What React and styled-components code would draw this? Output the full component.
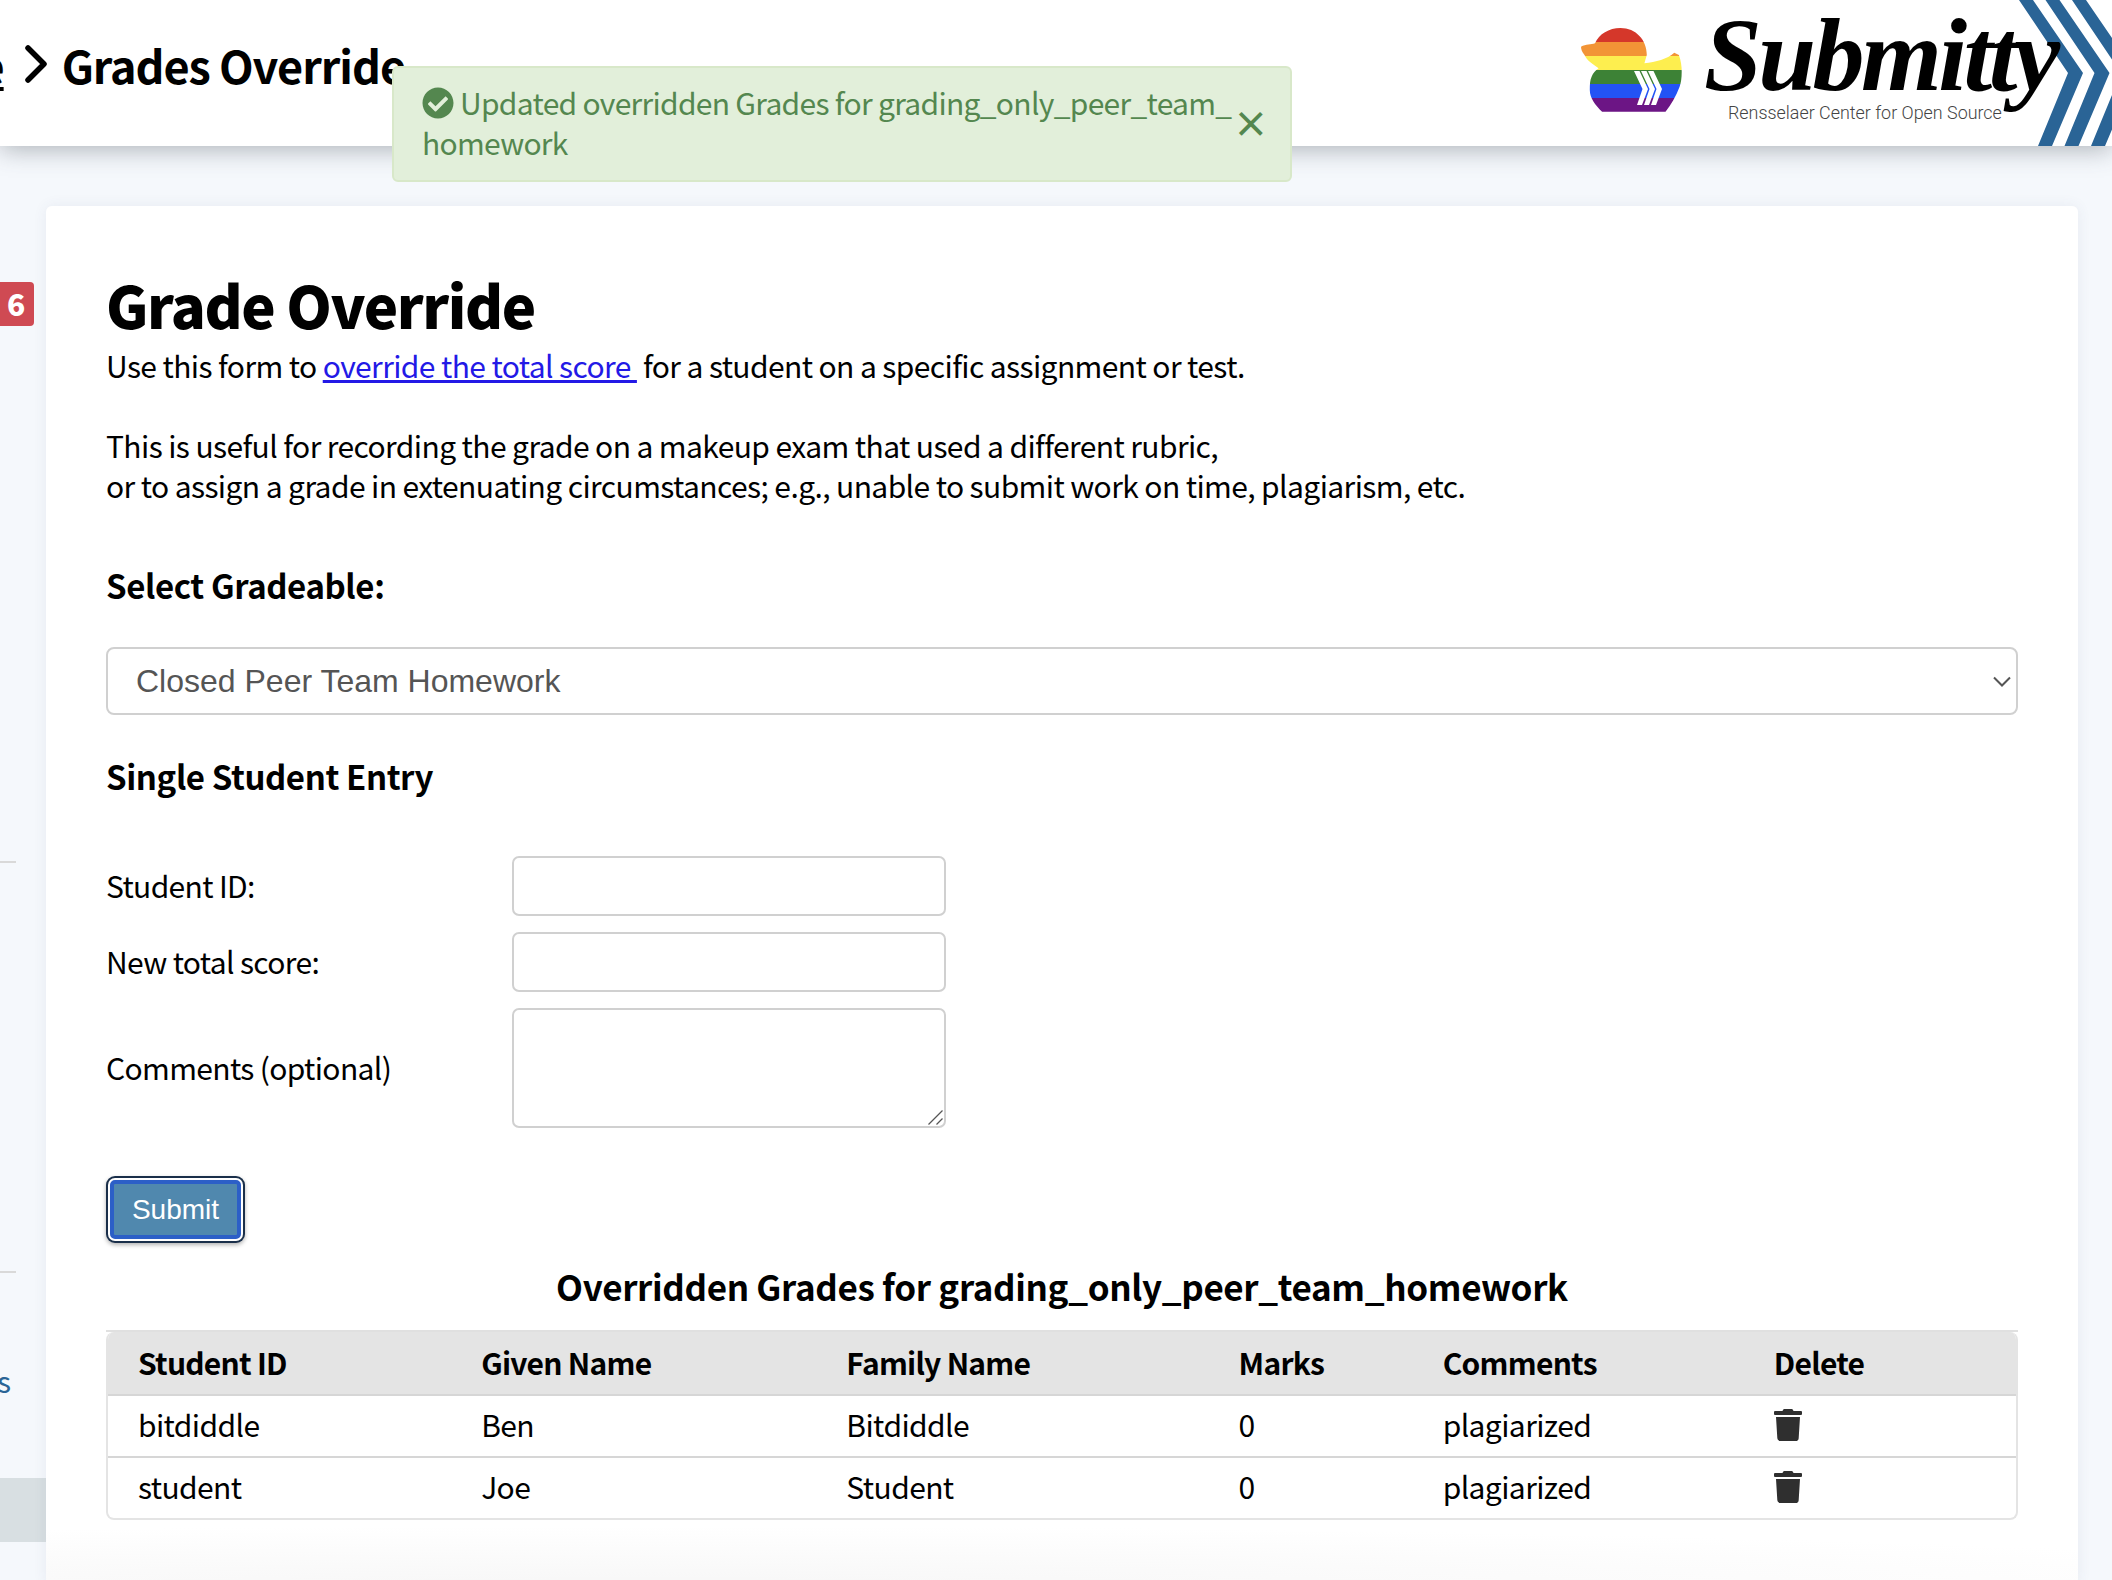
import React from 'react';
import styled, { createGlobalStyle } from 'styled-components';
import { FaTrash, FaCheckCircle } from 'react-icons/fa';

const SANS = '"Noto Sans CJK SC", "Noto Sans", sans-serif';
const ARIAL = '"Liberation Sans", Arial, sans-serif';

const GlobalStyle = createGlobalStyle`
  html, body {
    margin: 0;
    height: 1580px;
    overflow: hidden;
    background: #f5f8fc;
    font-family: ${SANS};
    color: #000;
  }
  * { box-sizing: border-box; }
`;

const Page = styled.div`
  display: flex;
  flex-direction: column;
  height: 1580px;
  overflow: hidden;
`;

const Header = styled.header`
  display: flex;
  justify-content: space-between;
  height: 146px;
  background: #fff;
  box-shadow: 0 3px 24px rgba(60, 70, 80, 0.4);
  position: relative;
`;

const Breadcrumbs = styled.nav`
  display: flex;
  justify-content: flex-end;
  align-items: center;
  width: 405px;
  height: 128px;
  overflow: hidden;
  white-space: nowrap;
  font-size: 45px;
  font-weight: 700;
  letter-spacing: -1.05px;
  flex-shrink: 0;
`;

const CrumbLink = styled.a`
  color: #000;
  text-decoration: underline;
`;

const CrumbArrow = styled.svg`
  width: 24px;
  height: 38px;
  margin: 0 14px 0 20px;
  flex-shrink: 0;
`;

const Logo = styled.div`
  display: flex;
  height: 146px;
  overflow: hidden;
  flex-shrink: 0;
`;

const Duck = styled.svg`
  width: 101px;
  height: 84px;
  margin-top: 28px;
  margin-right: 22px;
`;

const Wordmark = styled.div`
  position: relative;
  z-index: 1;
  width: 315px;
  height: 146px;
`;

const WordmarkName = styled.span`
  display: block;
  font-family: "Liberation Serif", serif;
  font-style: italic;
  font-weight: 700;
  font-size: 104px;
  line-height: 110px;
  letter-spacing: -3.6px;
  white-space: nowrap;
`;

const Tagline = styled.span`
  position: absolute;
  left: 24px;
  top: 101px;
  font-family: Roboto, sans-serif;
  font-weight: 300;
  font-size: 17.9px;
  line-height: 24px;
  color: #444;
  white-space: nowrap;
`;

const Chevrons = styled.svg`
  width: 93px;
  height: 146px;
`;

const Alert = styled.div`
  position: fixed;
  top: 66px;
  left: 392px;
  width: 900px;
  height: 116px;
  padding: 14px 50px 0 28px;
  background: #e2efda;
  border: 2px solid #d8e8c9;
  border-radius: 6px;
  color: #54874f;
  font-size: 30px;
  letter-spacing: -0.7px;
  line-height: 40px;
  z-index: 5;
`;

const AlertIcon = styled(FaCheckCircle)`
  width: 32px;
  height: 32px;
  margin-right: 6px;
  vertical-align: -4px;
`;

const AlertClose = styled.span`
  position: absolute;
  right: 22px;
  top: 34px;
  font-size: 36px;
  line-height: 40px;
  font-weight: 700;
`;

const Main = styled.div`
  display: flex;
  flex: 1;
  padding-top: 60px;
  min-height: 0;
`;

const Sidebar = styled.aside`
  display: flex;
  flex-direction: column;
  width: 46px;
  flex-shrink: 0;
`;

const Badge = styled.span`
  align-self: flex-start;
  width: 34px;
  height: 44px;
  margin-top: 76px;
  padding-left: 7px;
  background: #cf4a53;
  border-radius: 0 4px 4px 0;
  color: #fff;
  font-size: 30px;
  font-weight: 900;
  line-height: 42px;
`;

const SideRule = styled.hr`
  width: 16px;
  height: 2px;
  margin: ${(p) => p.$top}px 0 0;
  border: 0;
  background: #d9d9d9;
`;

const SideLabel = styled.span`
  margin-top: 87px;
  color: #2a6496;
  font-size: 30px;
  line-height: 40px;
  height: 40px;
  overflow: hidden;
  display: flex;
  justify-content: flex-end;
  width: 11px;
`;

const SideActive = styled.div`
  height: 64px;
  margin-top: 78px;
  background: #d8dfe2;
`;

const Card = styled.main`
  width: 2032px;
  height: 1380px;
  padding: 64px 60px 0;
  background: radial-gradient(ellipse 1800px 60px at 30% 100%, #f7f7f7, #fff);
  border-radius: 6px;
  box-shadow: 0 0 14px rgba(60, 80, 110, 0.08);
`;

const Title = styled.h1`
  margin: 0;
  font-size: 58px;
  font-weight: 900;
  letter-spacing: -1.4px;
  line-height: 68px;
`;

const Text = styled.p`
  margin: ${(p) => p.$top}px 0 0;
  font-size: 30px;
  letter-spacing: -0.6px;
  line-height: 40px;
`;

const TextLink = styled.a`
  color: #2319e6;
  text-decoration: underline;
  margin-right: 6px;
`;

const SectionTitle = styled.h2`
  margin: ${(p) => p.$top}px 0 0;
  font-size: 33px;
  font-weight: 700;
  letter-spacing: -0.4px;
  line-height: 40px;
`;

const SelectWrap = styled.div`
  position: relative;
  margin-top: 42px;
`;

const GradeableSelect = styled.select`
  display: block;
  width: 100%;
  height: 68px;
  padding: 0 0 0 28px;
  appearance: none;
  background: #fff;
  border: 2px solid #d0d0d0;
  border-radius: 8px;
  color: #555;
  font-family: ${ARIAL};
  font-size: 32px;
`;

const SelectArrow = styled.svg`
  position: absolute;
  right: 7px;
  top: 29px;
  width: 18px;
  height: 11px;
`;

const EntryForm = styled.form`
  display: grid;
  grid-template-columns: 406px 434px;
  row-gap: 16px;
  align-items: center;
  margin-top: 60px;
`;

const FieldLabel = styled.label`
  padding-bottom: 2px;
  font-size: 30px;
  letter-spacing: -0.65px;
  line-height: 40px;
`;

const TextField = styled.input`
  display: block;
  width: 100%;
  height: 60px;
  background: #fff;
  border: 2px solid #d0d0d0;
  border-radius: 7px;
`;

const CommentsWrap = styled.div`
  position: relative;
  height: 120px;
`;

const CommentsField = styled.textarea`
  display: block;
  width: 100%;
  height: 100%;
  resize: none;
  background: #fff;
  border: 2px solid #d0d0d0;
  border-radius: 7px;
`;

const ResizeGrip = styled.svg`
  position: absolute;
  right: 3px;
  bottom: 3px;
  width: 15px;
  height: 15px;
`;

const SubmitButton = styled.button`
  display: block;
  width: 131px;
  height: 59px;
  margin: 52px 0 0 4px;
  padding: 0;
  background: #5088ae;
  border: 4px solid #2c5fc7;
  border-radius: 5px;
  box-shadow: 0 0 0 2px #fff, 0 0 0 4px #1a2f4a, 0 2px 4px 4px rgba(0, 0, 0, 0.3);
  color: #fff;
  font-family: ${ARIAL};
  font-size: 28px;
`;

const TableTitle = styled.h2`
  margin: 27px 0 0;
  font-size: 35px;
  font-weight: 700;
  letter-spacing: -0.35px;
  line-height: 40px;
  text-align: center;
`;

const TableRule = styled.div`
  height: 2px;
  margin-top: 24px;
  background: #e0e0e0;
`;

const TableFrame = styled.div`
  border: solid #e4e4e4;
  border-width: 0 2px 2px;
  border-radius: 8px;
  overflow: hidden;
`;

const GradesTable = styled.table`
  width: 100%;
  table-layout: fixed;
  border-collapse: separate;
  border-spacing: 0;
  font-size: 30px;
  letter-spacing: -0.6px;
`;

const HeadCell = styled.th`
  height: 64px;
  padding: 0 0 3px 30px;
  background: #e4e4e4;
  border-bottom: 2px solid #d6d6d6;
  font-weight: 700;
  letter-spacing: -0.75px;
  text-align: left;
`;

const Cell = styled.td`
  height: ${(p) => (p.$last ? 60 : 62)}px;
  padding: 0 0 4px 30px;
  border-bottom: ${(p) => (p.$last ? 0 : '2px solid #d6d6d6')};
`;

const TrashIcon = styled(FaTrash)`
  display: block;
  width: 28px;
  height: 32px;
  margin-top: 2px;
  color: #2f2f2f;
`;

const grades = [
  { id: 'bitdiddle', given: 'Ben', family: 'Bitdiddle', marks: 0, comment: 'plagiarized' },
  { id: 'student', given: 'Joe', family: 'Student', marks: 0, comment: 'plagiarized' },
];

const columns = [343, 365, 392, 204, 331, 272];

// white stripes of the chevron inside the duck
const duckStripes = [0, 7, 14];

const App = () => (
  <Page>
    <GlobalStyle />
    <Header>
      <Breadcrumbs>
        <CrumbLink>Home</CrumbLink>
        <CrumbArrow viewBox="0 0 24 38">
          <path d="M4 3 L20 19 L4 35" fill="none" stroke="#000" strokeWidth="5.5" strokeLinecap="round" strokeLinejoin="round" />
        </CrumbArrow>
        <span>Grades Override</span>
      </Breadcrumbs>
      <Logo>
        <Duck viewBox="0 0 101 84">
          <defs>
            <clipPath id="duck-shape">
              <path d="M39.4 0C55 0 65.8 12 65.8 27L63.4 35.3C75 34 86 31 93.3 24.7L97.9 27C100 33 100.7 38 100.7 43.7C100.7 50 100 55 98.6 58.7C95 68 90 77 84.5 83.7L21.1 83.7C14 77 8.8 70 8.8 62C8.8 56 9 52 10.6 48.7C12 45 15 42 17.6 40.3C12 36 6 33 3.5 27C1 24 0 21 0 18.7C5 16 10 17 14 15.3C18 6 28 0 39.4 0Z" />
            </clipPath>
          </defs>
          <g clipPath="url(#duck-shape)">
            <rect y="0" width="101" height="14" fill="#d5372a" />
            <rect y="14" width="101" height="14" fill="#f29436" />
            <rect y="28" width="101" height="14" fill="#fdee4f" />
            <rect y="42" width="101" height="14" fill="#3d8236" />
            <rect y="56" width="101" height="14" fill="#2353f5" />
            <rect y="70" width="101" height="14" fill="#6c1585" />
          </g>
          {duckStripes.map((d) => (
            <path
              key={d}
              d={`M${53 + d} 43H${58.5 + d}L${67 + d} 61L${61 + d} 77H${56 + d}L${61.5 + d} 61Z`}
              fill="#fff"
            />
          ))}
        </Duck>
        <Wordmark>
          <WordmarkName>Submitty</WordmarkName>
          <Tagline>Rensselaer Center for Open Source</Tagline>
        </Wordmark>
        <Chevrons viewBox="0 0 93 146">
          <path d="M0 0H14L64 73L33 146H19L49 73Z" fill="#2a6496" />
          <path d="M26.5 0H40.5L90.5 73L59.5 146H45.5L75.5 73Z" fill="#2a6496" />
          <path d="M53 0H67L117 73L86 146H72L102 73Z" fill="#2a6496" />
        </Chevrons>
      </Logo>
    </Header>

    <Alert>
      <AlertIcon />
      Updated overridden Grades for grading_only_peer_team_
      <br />
      homework
      <AlertClose>×</AlertClose>
    </Alert>

    <Main>
      <Sidebar>
        <Badge>6</Badge>
        <SideRule $top={535} />
        <SideRule $top={408} />
        <SideLabel>s</SideLabel>
        <SideActive />
      </Sidebar>
      <Card>
        <Title>Grade Override</Title>
        <Text $top={7}>
          Use this form to <TextLink href="#">override the total score </TextLink> for a student on a specific assignment or test.
        </Text>
        <Text $top={40}>
          This is useful for recording the grade on a makeup exam that used a different rubric,
          <br />
          or to assign a grade in extenuating circumstances; e.g., unable to submit work on time, plagiarism, etc.
        </Text>
        <SectionTitle $top={60}>Select Gradeable:</SectionTitle>
        <SelectWrap>
          <GradeableSelect defaultValue="closed">
            <option value="closed">Closed Peer Team Homework</option>
          </GradeableSelect>
          <SelectArrow viewBox="0 0 18 11">
            <path d="M1 1.5 L9 9.5 L17 1.5" fill="none" stroke="#555" strokeWidth="2" />
          </SelectArrow>
        </SelectWrap>
        <SectionTitle $top={41}>Single Student Entry</SectionTitle>
        <EntryForm>
          <FieldLabel>Student ID:</FieldLabel>
          <TextField />
          <FieldLabel>New total score:</FieldLabel>
          <TextField />
          <FieldLabel>Comments (optional)</FieldLabel>
          <CommentsWrap>
            <CommentsField />
            <ResizeGrip viewBox="0 0 15 15">
              <path d="M0.5 14.5 L14.5 0.5 M8.5 14.5 L14.5 8.5" stroke="#555" strokeWidth="1.3" fill="none" />
            </ResizeGrip>
          </CommentsWrap>
        </EntryForm>
        <SubmitButton type="button">Submit</SubmitButton>
        <TableTitle>Overridden Grades for grading_only_peer_team_homework</TableTitle>
        <TableRule />
        <TableFrame>
          <GradesTable>
            <colgroup>
              {columns.map((w) => (
                <col key={w} width={w} />
              ))}
            </colgroup>
            <thead>
              <tr>
                <HeadCell>Student ID</HeadCell>
                <HeadCell>Given Name</HeadCell>
                <HeadCell>Family Name</HeadCell>
                <HeadCell>Marks</HeadCell>
                <HeadCell>Comments</HeadCell>
                <HeadCell>Delete</HeadCell>
              </tr>
            </thead>
            <tbody>
              {grades.map((g, i) => {
                const last = i === grades.length - 1;
                return (
                  <tr key={g.id}>
                    <Cell $last={last}>{g.id}</Cell>
                    <Cell $last={last}>{g.given}</Cell>
                    <Cell $last={last}>{g.family}</Cell>
                    <Cell $last={last}>{g.marks}</Cell>
                    <Cell $last={last}>{g.comment}</Cell>
                    <Cell $last={last}>
                      <TrashIcon />
                    </Cell>
                  </tr>
                );
              })}
            </tbody>
          </GradesTable>
        </TableFrame>
      </Card>
    </Main>
  </Page>
);

export default App;
